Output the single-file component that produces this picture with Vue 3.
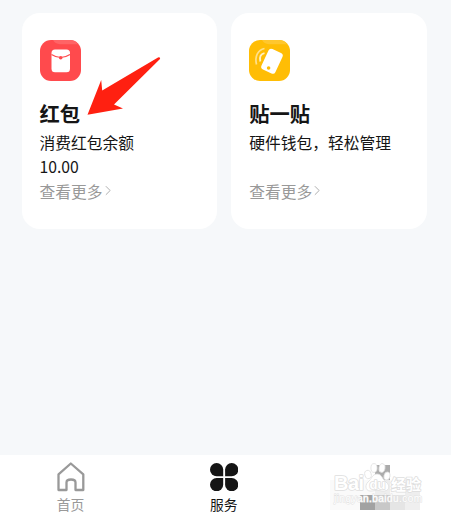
<script setup>
const cards = [
  { id: 'packet', title: '红包', lines: ['消费红包余额', '10.00'] },
  { id: 'tap', title: '贴一贴', lines: ['硬件钱包，轻松管理', ''] },
]
</script>

<template>
  <div class="screen">
    <main class="cards">
      <section v-for="card in cards" :key="card.id" class="card">
        <svg v-if="card.id === 'packet'" class="icon" viewBox="0 0 41 41">
          <rect width="41" height="41" rx="11" fill="#ff4a4d" />
          <path d="M13 0H30Q35 0 38 4.200H20Q15 4 13 0Z" fill="#ff6466" />
          <rect x="11.500" y="9.500" width="18.500" height="22.800" rx="3.500" fill="#fff" />
          <path d="M11.500 14.500Q20.700 20.500 30 14.500" fill="none" stroke="#ff4a4d" stroke-width="1.100" />
          <circle cx="20.700" cy="17.700" r="1.800" fill="#ff4a4d" />
        </svg>
        <svg v-else class="icon" viewBox="0 0 41 41">
          <rect width="41" height="41" rx="11" fill="#ffbd05" />
          <path d="M13 0H30Q35 0 38 4.200H20Q15 4 13 0Z" fill="#ffc72e" />
          <path d="M7.500 24.500C5.500 16.500 9 9.800 15.500 8.500" fill="none" stroke="#ffe08c" stroke-width="1.700" />
          <path d="M11.300 21.500C10.300 17 12 14 15.500 13.200" fill="none" stroke="#fff0c6" stroke-width="1.800" />
          <rect x="15.300" y="10" width="15.400" height="22.500" rx="3" fill="#fff" transform="rotate(25 23 21.200)" />
          <circle cx="19.600" cy="28" r="1.800" fill="#ffbd05" />
        </svg>
        <h2>{{ card.title }}</h2>
        <p v-for="(line, i) in card.lines" :key="i">{{ line }}</p>
        <p class="more">
          <span>查看更多</span>
          <svg viewBox="0 0 7 12"><path d="M1 1L6 6L1 11" /></svg>
        </p>
      </section>
      <svg class="arrow" viewBox="0 0 74 60">
        <path d="M0.500 57.700L14.200 23L15.200 33.500L71 0.400Q74 0 73 2L27 47.500L36 51.500Z" fill="#ff2011" />
      </svg>
    </main>

    <nav class="tabs">
      <div class="tab">
        <svg class="home" viewBox="0 0 28 30">
          <path d="M1.500 12.300L13.800 1.500L26.300 12.300V28H18.500V20.500Q18.500 17.500 14 17.500T9.500 20.500V28H1.500Z" />
        </svg>
        <span>首页</span>
      </div>
      <div class="tab active">
        <svg class="service" viewBox="0 0 28 28">
          <path d="M13.200 13.200H6.600A6.600 6.600 0 1 1 13.200 6.600Z" />
          <path d="M15.100 13.200V6.600A6.600 6.600 0 1 1 21.700 13.200Z" />
          <path d="M13.200 15.100V21.700A6.600 6.600 0 1 1 6.600 15.100Z" />
          <path d="M15.100 15.100H21.700A6.600 6.600 0 1 1 15.100 21.700Z" />
        </svg>
        <span>服务</span>
      </div>
      <div class="tab brand">
        <svg class="mark" viewBox="0 0 100 54">
          <g shape-rendering="crispEdges">
            <path d="M0 21H90V51H0Z" fill="#fafafa" />
            <path d="M45 6H60V21H45Z" fill="#ababab" />
            <path d="M45 21H60V36H45ZM75 21H90V36H75Z" fill="#eeeeee" />
            <path d="M30 36H45V51H30Z" fill="#a2a2a2" />
            <path d="M45 36H60V51H45Z" fill="#c8c8c8" />
            <path d="M60 36H75V51H60Z" fill="#e5e5e5" />
            <path d="M75 36H90V51H75Z" fill="#efefef" />
          </g>
          <g class="paw">
            <ellipse cx="38" cy="15.500" rx="3.200" ry="4.200" transform="rotate(-15 38 15.500)" />
            <ellipse cx="44" cy="9" rx="3.100" ry="4.400" />
            <ellipse cx="52" cy="9" rx="3" ry="4.400" transform="rotate(12 52 9)" />
            <ellipse cx="57" cy="17" rx="3" ry="4.100" transform="rotate(15 57 17)" />
            <path d="M47 15C42 15 42 20 38 23C34 27 36 33 42 32Q47 30.500 52 32C59 33 61 27 56 23C52 20 52 15 47 15Z" />
          </g>
          <g class="logo-text">
            <text x="4" y="31" font-size="20" textLength="30">Bai</text>
            <text x="39.500" y="30" font-size="13" textLength="16">du</text>
            <text x="61" y="30.500" font-size="15" textLength="30">经验</text>
          </g>
          <text class="site" x="4" y="42.500" textLength="88">jingyan.baidu.com</text>
        </svg>
      </div>
    </nav>
  </div>
</template>

<style>
body {
  margin: 0;
}
</style>

<style scoped>
.screen {
  width: 451px;
  height: 517px;
  display: flex;
  flex-direction: column;
  overflow: hidden;
  background: #f6f8fa;
  color: #151515;
  font-family: "Noto Sans CJK SC", sans-serif;
}
.cards {
  position: relative;
  flex: 1;
  display: flex;
  align-items: flex-start;
  gap: 14px;
  padding: 12.500px 24px 0 21.500px;
}
.card {
  box-sizing: border-box;
  flex: 1;
  height: 216.500px;
  padding: 27.500px 18px 0;
  border-radius: 18px;
  background: #fff;
}
.icon {
  display: block;
  width: 41px;
  height: 41px;
}
h2 {
  margin: 17px 0 3px;
  font-size: 20.300px;
  line-height: 30px;
  font-weight: 700;
}
p {
  margin: 0;
  height: 24.300px;
  font-size: 15.750px;
  line-height: 24.300px;
  white-space: nowrap;
}
.more {
  display: flex;
  align-items: center;
  gap: 2px;
  color: #999;
}
.more svg {
  width: 6px;
  height: 11px;
  margin-top: -3px;
  fill: none;
  stroke: #aaa;
  stroke-width: 1.100;
}
.arrow {
  position: absolute;
  left: 86.500px;
  top: 56.500px;
  width: 74px;
  height: 60px;
}
.tabs {
  display: flex;
  height: 62px;
  background: #fff;
}
.tab {
  width: 153.500px;
  flex: none;
  display: flex;
  flex-direction: column;
  align-items: center;
  box-sizing: border-box;
  color: #999;
  font-size: 13.800px;
  line-height: 20px;
}
.tab:first-child {
  width: 147px;
  padding-right: 6px;
}
.active {
  color: #151515;
}
.brand {
  padding-left: 5px;
}
.home {
  width: 28px;
  height: 30px;
  margin: 7px 0 2px;
  fill: none;
  stroke: #999;
  stroke-width: 2.300;
  stroke-linejoin: round;
}
.service {
  width: 28px;
  height: 28px;
  margin: 7.500px 0 3.500px;
  fill: #151515;
}
.mark {
  width: 100px;
  height: 54px;
  margin-top: 4px;
  overflow: visible;
}
.paw {
  fill: #fff;
  stroke: #e0e0e0;
  stroke-width: 0.800;
}
.logo-text {
  font-family: "Liberation Sans", "Noto Sans CJK SC", sans-serif;
  font-weight: 700;
  fill: #fff;
  stroke: #dedede;
  stroke-width: 1.600;
  stroke-linejoin: round;
  paint-order: stroke;
}
.site {
  font-family: "Liberation Sans", sans-serif;
  font-size: 10px;
  fill: #fff;
  stroke: #e2e2e2;
  stroke-width: 1;
  paint-order: stroke;
}
</style>
